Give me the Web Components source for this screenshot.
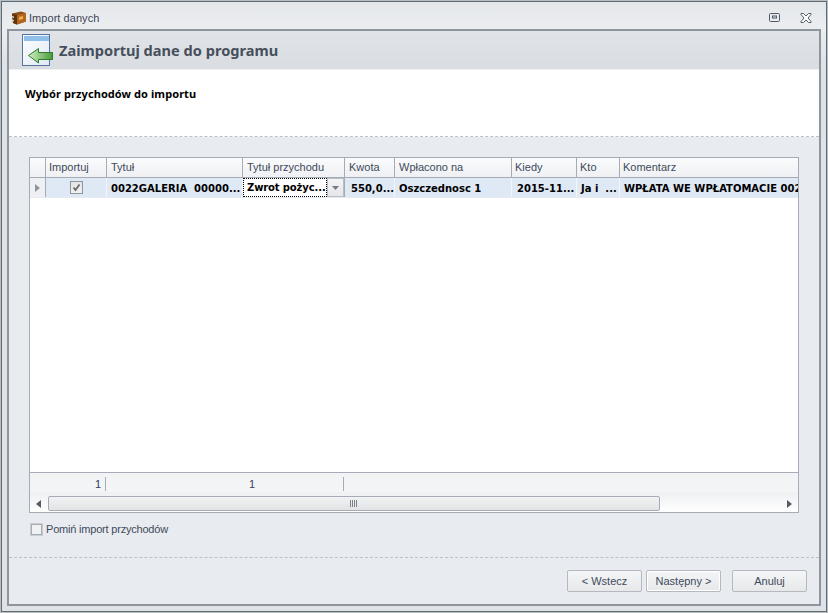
<!DOCTYPE html>
<html lang="pl">
<head>
<meta charset="utf-8">
<title>Import danych</title>
<style>
html, body { margin: 0; padding: 0; }
body { font: 11px "Liberation Sans", sans-serif; color: #3f4a5a; }
</style>
</head>
<body>
<wizard-window caption="Import danych">
  <wizard-header slot="header" heading="Zaimportuj dane do programu" sub="Wybór przychodów do importu"></wizard-header>
  <import-grid></import-grid>
  <skip-check label="Pomiń import przychodów"></skip-check>
  <wizard-footer slot="footer">
    <wizard-button>&lt; Wstecz</wizard-button>
    <wizard-button focused>Następny &gt;</wizard-button>
    <wizard-button gap>Anuluj</wizard-button>
  </wizard-footer>
</wizard-window>

<script type="module">
// small helper: class with open shadow root built from a string
const define = (name, render) => {
  customElements.define(name, class extends HTMLElement {
    constructor () {
      super();
      this.attachShadow({ mode: 'open' }).innerHTML = render(this);
    }
  });
};

define('wizard-window', el => `
  <style>
    :host { display: flex; flex-direction: column; box-sizing: border-box; width: 828px; height: 613px;
      border: 1px solid #b9bec3; background: #e3e6e9; }
    .edge { flex: 1; display: flex; flex-direction: column; min-height: 0; border: 1px solid #5f6b75;
      background: linear-gradient(#e4e7ea, #eceef0 28px, #dfe3e8 60px); }
    .title { height: 27px; box-sizing: border-box; padding: 4px 0 0 9px; display: flex; align-items: center; color: #3c4658; flex: none; }
    .title span { flex: 1; margin-left: 2px; letter-spacing: .05px; }
    .frame { flex: 1; min-height: 0; display: flex; flex-direction: column; margin: 0 5px 5px 5px;
      border: 2px solid #8e959c; background: #e8ebf0; }
    .body { flex: 1; min-height: 0; display: flex; flex-direction: column; padding: 20px 20px 0 20px; }
    svg { display: block; flex: none; }
  </style>
  <div class="edge">
    <div class="title">
      <svg width="16" height="14" viewBox="0 0 16 14">
        <path d="M1 2.500 L10 .5 L15 2 V10.500 L6 13.500 L2 12 Z" fill="#8a4f16"/>
        <path d="M6 4 L15 2 V10.500 L6 13.500 Z" fill="#b5651d"/>
        <path d="M1 2.500 L6 4 V13.500 L2 12 Z" fill="#5b3410"/>
        <path d="M8 6 L12 5 V8 L8 9 Z" fill="#e9b44c"/>
        <path d="M1 5 L3 5.500 V7 L1 6.500 Z M1 8.500 L3 9 V10.500 L1 10 Z" fill="#d8d2c0"/>
      </svg>
      <span>${el.getAttribute('caption')}</span>
      <svg width="12" height="10" viewBox="0 0 12 10" style="margin-right:19px">
        <rect x=".5" y=".5" width="10" height="8" rx="1" fill="none" stroke="#4f5b66"/>
        <rect x="3.500" y="3" width="4" height="2" fill="none" stroke="#4f5b66"/>
      </svg>
      <svg width="12" height="10" viewBox="0 0 12 10" style="margin-right:14px">
        <path d="M1 .5 H3.500 L6 3 L8.500 .5 H11 V1.500 L8 5 L11 8.500 V9.500 H8.500 L6 7 L3.500 9.500 H1 V8.500 L4 5 L1 1.500 Z" fill="#fff" stroke="#4f5b66"/>
      </svg>
    </div>
    <div class="frame">
      <slot name="header"></slot>
      <div class="body"><slot></slot></div>
      <slot name="footer"></slot>
    </div>
  </div>`);

define('wizard-header', el => `
  <style>
    :host { display: block; flex: none; }
    .top { height: 39px; display: flex; align-items: center; gap: 5px; padding-left: 13px;
      background: linear-gradient(#e0e4e8, #d9dde2); box-sizing: border-box; border-bottom: 1px solid #eef0f2; }
    h1 { margin: 0; font: bold 14.6px "Noto Sans", sans-serif; color: #474f5c; }
    .sub { height: 67px; background: #fff; box-sizing: border-box; padding: 16px 0 0 16px;
      font: bold 11px "Noto Sans", sans-serif; letter-spacing: .08px; color: #000; border-bottom: 1px dashed #bcc1c6; }
    svg { display: block; flex: none; }
  </style>
  <div class="top">
    <svg width="32" height="32" viewBox="0 0 32 32">
      <defs>
        <linearGradient id="pg" x1="0" y1="0" x2="1" y2="1"><stop offset="0" stop-color="#fff"/><stop offset="1" stop-color="#dfe9f5"/></linearGradient>
        <linearGradient id="ar" x1="0" y1="0" x2="1" y2="0"><stop offset="0" stop-color="#d2f0c0"/><stop offset="1" stop-color="#479a3a"/></linearGradient>
      </defs>
      <rect x=".5" y=".5" width="27" height="31" fill="url(#pg)" stroke="#54749e"/>
      <rect x="2" y="2" width="25" height="5" fill="#8fc0ea"/>
      <path d="M6.500 21.500 L16.500 14.500 V18.500 H30.500 V25.500 H16.500 V29 Z" fill="url(#ar)" stroke="#2d7a2a"/>
    </svg>
    <h1>${el.getAttribute('heading')}</h1>
  </div>
  <div class="sub">${el.getAttribute('sub')}</div>`);

// name, width, left padding
const columns = [
  ['Importuj', 61, 3], ['Tytuł', 136, 4], ['Tytuł przychodu', 102, 4], ['Kwota', 50, 4],
  ['Wpłacono na', 117, 4], ['Kiedy', 65, 3], ['Kto', 43, 3], ['Komentarz', 179, 3]
];

define('import-grid', () => `
  <style>
    :host { display: flex; flex-direction: column; box-sizing: border-box;
      height: 356px; flex: none; width: 770px; border: 1px solid #a5acb5; background: #fff; overflow: hidden; }
    .row { display: flex; flex: none; }
    .ind { flex: none; width: 16px; box-sizing: border-box; border-right: 1px solid #a5acb5; display: flex; align-items: center; justify-content: center; }
    .head { height: 20px; box-sizing: border-box; background: linear-gradient(#fafbfc, #eef0f3); border-bottom: 1px solid #a5acb5; color: #3f4a5a; }
    .head div { box-sizing: border-box; border-right: 1px solid #a5acb5; line-height: 18px; white-space: nowrap; overflow: hidden; flex: none; }
    .data { height: 20px; box-sizing: border-box; background: #dfe9f5; border-bottom: 1px solid #e6ebf1; font: bold 10px "DejaVu Sans", sans-serif; color: #000; }
    .data > div { box-sizing: border-box; border-right: 1px solid #f4f6f9; padding-left: 3px; line-height: 21px; white-space: nowrap; overflow: hidden; flex: none; }
    .data .ind { background: #eef0f3; border-right-color: #a5acb5; padding: 0; }
    .chk { display: flex; align-items: center; justify-content: center; padding: 0 !important; }
    .box { width: 11px; height: 11px; border: 1px solid #8f959c; background: linear-gradient(#e2e3e5, #f2f2f3); display: block; }
    .combo { display: flex !important; padding: 0 !important; background: #fff; border-right-color: #a5acb5 !important; }
    .combo b { flex: 1; outline: 1px dotted #000; outline-offset: -1px; padding-left: 4px; overflow: hidden; line-height: 20px; letter-spacing: -.12px; }
    .combo i { flex: none; width: 17px; display: flex; align-items: center; justify-content: center; background: linear-gradient(#f3f4f6, #e4e6e9); border: 1px solid #b9bec5; box-sizing: border-box; }
    .fill { flex: 1; min-height: 0; }
    .foot { height: 20px; box-sizing: border-box; flex: none; background: linear-gradient(#f1f3f5, #f4f5f7); border-top: 1px solid #a5acb5; align-items: center; color: #34405e; }
    .foot div { box-sizing: border-box; height: 14px; line-height: 15px; margin-top: 2px; flex: none; text-align: right; border-right: 1px solid #a5acb5; }
    .scroll { height: 20px; flex: none; box-sizing: border-box; padding: 4px 0 1px; display: flex; align-items: center; background: linear-gradient(#eef0f2, #fff); }
    .arrow { flex: none; width: 17px; display: flex; justify-content: center; }
    .track { flex: 1; display: flex; padding-left: 1px; }
    .thumb { width: 612px; height: 15px; box-sizing: border-box; border: 1px solid #a5acb5; border-radius: 2px; background: linear-gradient(#f1f2f3, #e1e3e5); display: flex; align-items: center; justify-content: center; }
    svg { display: block; }
  </style>
  <div class="row head">
    <span class="ind"></span>
    ${columns.map(c => `<div style="width:${c[1]}px;padding-left:${c[2]}px">${c[0]}</div>`).join('')}
  </div>
  <div class="row data">
    <span class="ind"><svg width="5" height="8" viewBox="0 0 5 8"><path d="M0 0 L5 4 L0 8 Z" fill="#8f959c"/></svg></span>
    <div class="chk" style="width:61px"><span class="box"><svg width="11" height="11" viewBox="0 0 11 11"><path d="M2.500 5.500 L4.500 8 L8.500 2.500" fill="none" stroke="#666" stroke-width="1.700"/></svg></span></div>
    <div style="width:136px;padding-left:4px">0022GALERIA&nbsp; 00000...</div>
    <div class="combo" style="width:102px"><b>Zwrot pożyc...</b><i><svg width="7" height="4" viewBox="0 0 7 4"><path d="M0 0 H7 L3.500 4 Z" fill="#767c84"/></svg></i></div>
    <div style="width:50px;padding-left:6px">550,0...</div>
    <div style="width:117px;padding-left:4px">Oszczednosc 1</div>
    <div style="width:65px;padding-left:5px">2015-11...</div>
    <div style="width:43px;padding-left:4px">Ja i&nbsp; ...</div>
    <div style="width:179px;padding-left:4px">WPŁATA WE WPŁATOMACIE 002</div>
  </div>
  <div class="fill"></div>
  <div class="row foot">
    <span class="ind" style="border:0"></span>
    <div style="width:60px;padding-right:4px">1</div>
    <div style="width:238px;padding-right:88px">1</div>
  </div>
  <div class="scroll">
    <span class="arrow"><svg width="5" height="8" viewBox="0 0 5 8"><path d="M5 0 L0 4 L5 8 Z" fill="#555b63"/></svg></span>
    <div class="track"><div class="thumb"><svg width="8" height="7" viewBox="0 0 8 7"><path d="M.5 0 V7 M2.500 0 V7 M4.500 0 V7 M6.500 0 V7" stroke="#7c8289"/></svg></div></div>
    <span class="arrow"><svg width="5" height="8" viewBox="0 0 5 8"><path d="M0 0 L5 4 L0 8 Z" fill="#555b63"/></svg></span>
  </div>`);

define('skip-check', el => `
  <style>
    :host { display: flex; align-items: center; gap: 4px; margin: 9px 0 0 2px; height: 14px; color: #3f4a5a; letter-spacing: -.2px; }
    span { width: 9px; height: 9px; border: 1px solid #a5acb5; background: #f0f1f3; outline: 1px solid #c9cdd2; }
  </style>
  <span></span>${el.getAttribute('label')}`);

define('wizard-footer', () => `
  <style>
    :host { display: flex; justify-content: flex-end; gap: 4px; flex: none; height: 47px; box-sizing: border-box;
      border-top: 1px dashed #bcc1c6; padding: 12px 12px 0 0; }
  </style>
  <slot></slot>`);

define('wizard-button', el => `
  <style>
    :host { display: flex; align-items: center; justify-content: center; box-sizing: border-box; width: 75px; height: 22px;
      border: 1px solid #b4b9bf; border-radius: 2px; background: linear-gradient(#f4f5f6, #e6e8ea); color: #3f4a5a;
      ${el.hasAttribute('gap') ? 'margin-left: 7px;' : ''}
      ${el.hasAttribute('focused') ? 'box-shadow: inset 0 0 0 1px #fff;' : ''} }
  </style>
  <slot></slot>`);
</script>
</body>
</html>
